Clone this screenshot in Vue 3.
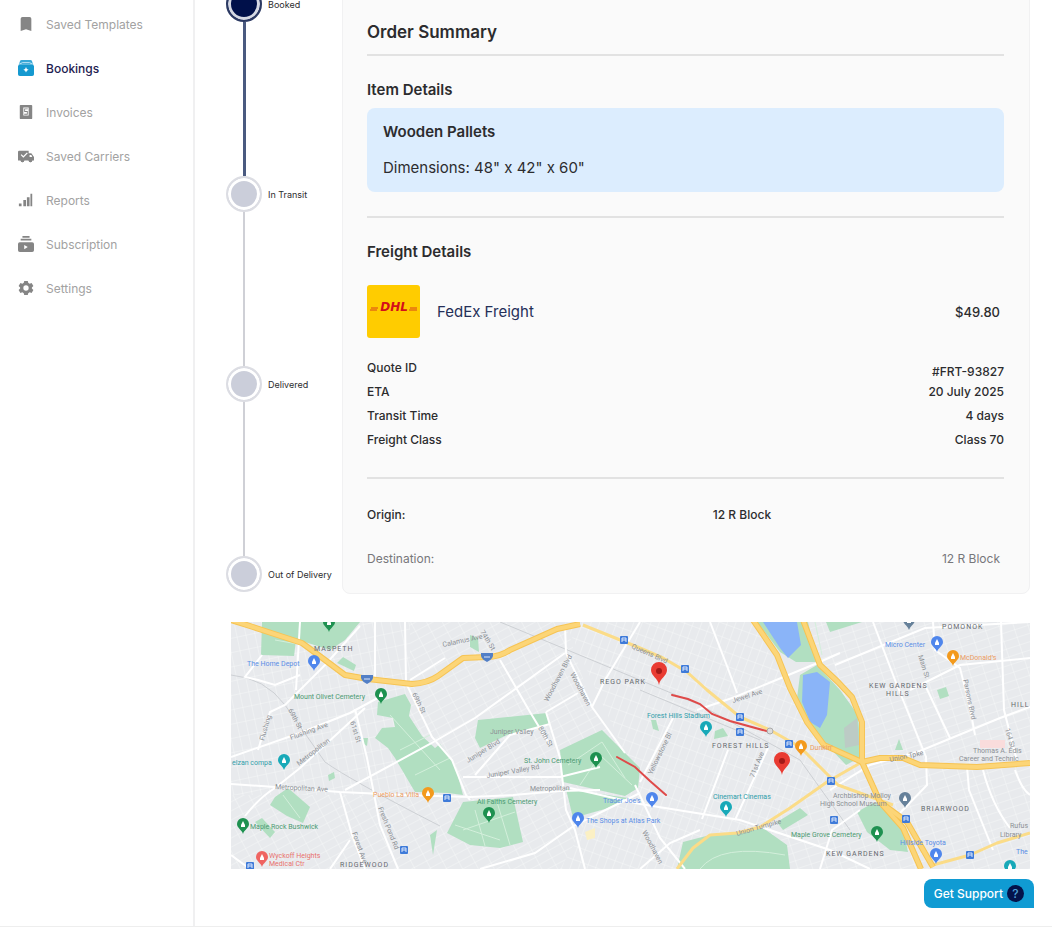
<script setup>
const navItems = [
  { label: 'Saved Templates', icon: 'bookmark' },
  { label: 'Bookings', icon: 'booking', active: true },
  { label: 'Invoices', icon: 'invoice' },
  { label: 'Saved Carriers', icon: 'truck' },
  { label: 'Reports', icon: 'bars' },
  { label: 'Subscription', icon: 'subscription' },
  { label: 'Settings', icon: 'gear' },
]

const steps = [
  { label: 'Booked', done: true },
  { label: 'In Transit' },
  { label: 'Delivered' },
  { label: 'Out of Delivery' },
]

const freight = [
  { label: 'Quote ID', value: '#FRT-93827', low: true },
  { label: 'ETA', value: '20 July 2025' },
  { label: 'Transit Time', value: '4 days' },
  { label: 'Freight Class', value: 'Class 70' },
]

const parks = [
  '262,622 360,622 345,640 330,650 308,643 296,640 294,656 261,655',
  '337,663 343,657 356,665 354,671',
  '378,702 405,694 411,705 409,716 422,736 435,748 440,744 455,765 463,795 448,793 415,792 395,758 388,748 375,738 382,728 395,727 393,718 377,715',
  '275,797 288,788 310,807 303,823 287,816 270,805',
  '255,822 262,818 275,832 270,838',
  '478,720 547,713 549,725 507,735 480,748 475,738',
  '560,750 602,730 640,768 638,788 625,796 563,782',
  '566,789 628,798 605,809 573,818',
  '463,802 513,797 523,842 500,848 470,845 447,833',
  '430,835 437,830 433,855',
  '470,635 478,638 479,652 470,647',
  '757,622 808,622 817,662 796,662 780,652',
  '800,675 817,665 840,690 858,715 861,757 846,765 830,748 810,728 797,698',
  '826,622 862,622 830,632',
  '683,842 710,835 737,833 763,828 787,845 790,869 677,869',
  '777,822 800,808 808,815 783,830',
  '857,812 873,803 900,815 908,852 890,850 867,832',
  '715,731 723,728 728,736 714,739',
  '651,720 656,720 659,731 653,729',
  '937,690 946,687 949,696 940,699',
  '895,750 899,739 903,750',
  '328,775 334,772 335,778 329,781',
  '363,738 368,738 367,746 364,744',
]

const streets = [
  'M231 757 L300 733 L350 713 L385 694',
  'M231 784 L275 787 L340 792 L405 795 L470 797 L513 795 L560 791 L600 790',
  'M245 816 Q260 797 275 788 L300 768 L350 722 L365 708',
  'M355 709 L367 758 L380 825 L398 869',
  'M262 655 L245 677 L258 680 L275 685 L300 675',
  'M360 626 L325 665 L285 705 L270 712 L258 750',
  'M300 622 L296 690',
  'M375 622 V678 M405 622 L406 682',
  'M345 790 L430 744 L475 718 L565 653',
  'M406 683 L432 737 L452 760 L466 795 L470 800',
  'M410 680 L445 658',
  'M565 625 L566 653 L592 707 L625 753',
  'M500 660 L530 712 L550 745',
  'M546 712 L560 758 L566 810 L575 830 L585 869',
  'M546 712 L578 693',
  'M475 775 L510 735 L550 724',
  'M463 777 H560 L600 767',
  'M480 869 L535 853 L575 825 L640 793',
  'M340 792 L352 835 L365 869',
  'M570 788 L640 804 L740 820 L830 850 L870 869',
  'M640 622 L605 680 L592 707',
  'M635 785 L660 838 L685 869',
  'M640 869 L670 843 L700 830',
  'M710 622 L727 666 L737 693',
  'M697 710 L735 697 L815 664 L840 653',
  'M835 665 L925 628 L1030 622',
  'M728 750 L702 819 M768 748 L735 820 M673 718 L640 782',
  'M873 622 L895 680 L926 757 L927 785 L900 813',
  'M830 790 L870 765 L920 751 L1000 718 L1030 707',
  'M933 622 L935 650 L960 668 L970 708 L975 735',
  'M1001 622 L1004 710 L1018 765',
  'M910 690 L960 665 L1030 658',
  'M925 685 L950 738 M967 767 L969 790 L993 850',
  'M983 770 Q992 805 1010 828 M1015 770 Q1022 790 1030 795',
  'M250 869 L231 855 M330 869 L350 840',
  'M820 869 L832 830 L860 810',
]

const highways = [
  'M231 620 L253 627 L302 643 L325 660 L345 675 L368 679 L412 684 Q428 683 438 676 L463 658 L487 657 Q500 657 510 650 L557 629 L580 624',
  'M753 620 L777 655 L790 688 L807 722 L824 745 L862 762',
  'M803 620 L820 665 L838 682 L852 697 L862 722 L862 762 L880 802 L907 822 L933 867',
  'M880 802 L903 828 L921 869',
  'M862 762 L880 758 L903 758 L920 765 L977 767 L1030 763',
]

const avenues = [
  'M583 625 L640 648 L663 658 L687 672 L707 690 L740 717 L770 730 L800 747 L838 785 L893 805',
  'M862 762 L827 782 L790 808 L760 827 L737 833 L710 835 L693 848 L677 869',
  'M933 865 L970 855 L997 843 L1030 833',
]

const pins = [
  { x: 314, y: 671, color: '#4f86ec' },
  { x: 381, y: 704, color: '#1e9150' },
  { x: 284, y: 770, color: '#18a9b8' },
  { x: 428, y: 803, color: '#f39a1d' },
  { x: 243, y: 834, color: '#1e9150' },
  { x: 262, y: 867, color: '#ef6461' },
  { x: 596, y: 768, color: '#1e9150' },
  { x: 489, y: 823, color: '#1e9150' },
  { x: 578, y: 828, color: '#4f86ec' },
  { x: 652, y: 808, color: '#4f86ec' },
  { x: 706, y: 737, color: '#18a9b8' },
  { x: 726, y: 817, color: '#18a9b8' },
  { x: 801, y: 756, color: '#f39a1d' },
  { x: 937, y: 652, color: '#4f86ec' },
  { x: 953, y: 666, color: '#f39a1d' },
  { x: 905, y: 808, color: '#66819a' },
  { x: 877, y: 842, color: '#1e9150' },
  { x: 936, y: 864, color: '#4f86ec' },
  { x: 329, y: 632, color: '#1e9150' },
  { x: 1010, y: 876, color: '#18a9b8' },
  { x: 909, y: 630, color: '#66819a' },
]

const stations = [
  [250, 866], [404, 850], [447, 798], [624, 640], [685, 669], [740, 717],
  [740, 732], [789, 744], [831, 781], [834, 820], [906, 819], [970, 855],
]

const shields = [[367, 679], [487, 657]]

const labels = [
  { x: 247, y: 666, t: 'The Home Depot', k: 'shop' },
  { x: 294, y: 699, t: 'Mount Olivet Cemetery', k: 'park' },
  { x: 232, y: 765, t: 'elzan compa', k: 'teal' },
  { x: 373, y: 797, t: 'Pueblo La Villa', k: 'food' },
  { x: 250, y: 829, t: 'Maple Rock Bushwick', k: 'park' },
  { x: 269, y: 858, t: 'Wyckoff Heights', k: 'health' },
  { x: 269, y: 866, t: 'Medical Ctr', k: 'health' },
  { x: 340, y: 867, t: 'RIDGEWOOD', k: 'area' },
  { x: 314, y: 651, t: 'MASPETH', k: 'area' },
  { x: 600, y: 684, t: 'REGO PARK', k: 'area' },
  { x: 647, y: 718, t: 'Forest Hills Stadium', k: 'teal' },
  { x: 712, y: 748, t: 'FOREST HILLS', k: 'area' },
  { x: 713, y: 799, t: 'Cinemart Cinemas', k: 'teal' },
  { x: 524, y: 763, t: 'St. John Cemetery', k: 'park' },
  { x: 477, y: 804, t: 'All Faiths Cemetery', k: 'park' },
  { x: 586, y: 823, t: 'The Shops at Atlas Park', k: 'shop' },
  { x: 603, y: 803, t: 'Trader Joe’s', k: 'shop' },
  { x: 885, y: 647, t: 'Micro Center', k: 'shop' },
  { x: 960, y: 660, t: 'McDonald’s', k: 'food' },
  { x: 869, y: 688, t: 'KEW GARDENS', k: 'area' },
  { x: 886, y: 696, t: 'HILLS', k: 'area' },
  { x: 1011, y: 707, t: 'HILL', k: 'area' },
  { x: 973, y: 753, t: 'Thomas A. Edis', k: 'road' },
  { x: 959, y: 761, t: 'Career and Technic', k: 'road' },
  { x: 833, y: 798, t: 'Archbishop Molloy', k: 'road' },
  { x: 820, y: 806, t: 'High School Museum', k: 'road' },
  { x: 921, y: 811, t: 'BRIARWOOD', k: 'area' },
  { x: 791, y: 837, t: 'Maple Grove Cemetery', k: 'park' },
  { x: 826, y: 856, t: 'KEW GARDENS', k: 'area' },
  { x: 900, y: 845, t: 'Hillside Toyota', k: 'shop' },
  { x: 1010, y: 828, t: 'Rufus', k: 'road' },
  { x: 1000, y: 837, t: 'Library', k: 'road' },
  { x: 1016, y: 854, t: 'The', k: 'shop' },
  { x: 810, y: 750, t: 'Dunkin’', k: 'food' },
  { x: 942, y: 629, t: 'POMONOK', k: 'area' },
]

const roadNames = [
  { x: 291, y: 740, r: -20, t: 'Flushing Ave' },
  { x: 299, y: 766, r: -38, t: 'Metropolitan' },
  { x: 264, y: 741, r: -74, t: 'Flushing' },
  { x: 288, y: 710, r: 62, t: '69th St' },
  { x: 275, y: 789, r: 3, t: 'Metropolitan Ave' },
  { x: 350, y: 722, r: 72, t: '61st St' },
  { x: 378, y: 808, r: 68, t: 'Fresh Pond Rd' },
  { x: 352, y: 833, r: 70, t: 'Forest Ave' },
  { x: 412, y: 694, r: 64, t: '69th St' },
  { x: 443, y: 647, r: -12, t: 'Calamus Ave' },
  { x: 480, y: 632, r: 58, t: '74th St' },
  { x: 548, y: 702, r: -62, t: 'Woodhaven Blvd' },
  { x: 570, y: 674, r: 62, t: 'Woodhaven' },
  { x: 490, y: 734, r: 0, t: 'Juniper Valley' },
  { x: 468, y: 763, r: -32, t: 'Juniper Blvd' },
  { x: 487, y: 778, r: -10, t: 'Juniper Valley Rd' },
  { x: 530, y: 791, r: -1, t: 'Metropolitan' },
  { x: 538, y: 728, r: 60, t: '80th St' },
  { x: 631, y: 648, r: 24, t: 'Queens Blvd' },
  { x: 652, y: 775, r: -64, t: 'Yellowstone Bl' },
  { x: 733, y: 703, r: -18, t: 'Jewel Ave' },
  { x: 754, y: 778, r: -68, t: '71st Ave' },
  { x: 642, y: 832, r: 62, t: 'Woodhaven' },
  { x: 737, y: 836, r: -16, t: 'Union Turnpike' },
  { x: 963, y: 680, r: 78, t: 'Parsons Blvd' },
  { x: 918, y: 656, r: 72, t: 'Main St' },
  { x: 1005, y: 729, r: 74, t: '164 St' },
  { x: 890, y: 762, r: -12, t: 'Union Tpke' },
]
</script>

<template>
  <div class="page">
    <nav class="sidebar" aria-label="Main">
      <a v-for="item in navItems" :key="item.label" href="#" class="nav-link" :class="{ active: item.active }">
        <svg class="nav-icon" viewBox="0 0 18 18" fill="currentColor" aria-hidden="true">
          <path v-if="item.icon === 'bookmark'" d="M5 1h8a2 2 0 0 1 2 2v14l-6-2-6 2V3a2 2 0 0 1 2-2z" />
          <template v-else-if="item.icon === 'booking'">
            <path d="M4 0h10a2 2 0 0 1 2 2l1 3H1l1-3a2 2 0 0 1 2-2z" opacity=".85" />
            <path d="M1 5l4-2h8l4 2" stroke="#d5eefa" stroke-width="1" fill="none" />
            <path fill-rule="evenodd" d="M1 5h16l1 2v9a2 2 0 0 1-2 2H2a2 2 0 0 1-2-2V7zM9 8l-1 2-2 1 2 1 1 2 1-2 2-1-2-1z" />
          </template>
          <path v-else-if="item.icon === 'invoice'" fill-rule="evenodd" d="M3 1h12a1 1 0 0 1 1 1v14a1 1 0 0 1-1 1H3a1 1 0 0 1-1-1V2a1 1 0 0 1 1-1zM6 4v9h6V4zM7 5h4v1H8v2h3v4H7v-1h3V9H7z" />
          <template v-else-if="item.icon === 'truck'">
            <path fill-rule="evenodd" d="M1 3h11v3h3l3 4v4h-2a2 2 0 0 1-4 0H7a2 2 0 0 1-4 0H0V4zM3 8l3 3 5-5-1-1-4 4-2-2zM13 8v2h3l-1-2z" />
            <circle cx="5" cy="14" r="2" />
            <circle cx="14" cy="14" r="2" />
          </template>
          <path v-else-if="item.icon === 'bars'" d="M1 13h3v3H1zM6 9h3v7H6zM10 6h3v10h-3zM14 2h2v14h-2z" />
          <path v-else-if="item.icon === 'subscription'" fill-rule="evenodd" d="M5 0h8v2H5zM3 3h12v2H3zM2 7h14a2 2 0 0 1 2 2v7a2 2 0 0 1-2 2H2a2 2 0 0 1-2-2V9a2 2 0 0 1 2-2zM7 10v5l4-2.500z" />
          <path v-else fill-rule="evenodd" d="M7 1h4l.5 2.200 1.600.9 2.200-.7 2 3.400L15.600 8.300v1.400l1.700 1.500-2 3.400-2.200-.7-1.600.9L11 17H7l-.5-2.200-1.600-.9-2.200.7-2-3.400 1.700-1.500V8.300L.7 6.800l2-3.400 2.200.7 1.600-.9zM9 6a3 3 0 1 0 0 6 3 3 0 0 0 0-6z" />
        </svg>
        <span>{{ item.label }}</span>
      </a>
    </nav>

    <main class="main">
      <div class="order">
        <ol class="steps">
          <li v-for="step in steps" :key="step.label" class="step" :class="{ done: step.done }">
            <span class="dot"></span>
            <span class="step-label">{{ step.label }}</span>
          </li>
        </ol>

        <section class="card">
          <h1>Order Summary</h1>
          <hr />
          <h2 class="item-heading">Item Details</h2>
          <div class="item">
            <strong>Wooden Pallets</strong>
            <span>Dimensions: 48" x 42" x 60"</span>
          </div>
          <hr />
          <h2>Freight Details</h2>
          <div class="carrier">
            <svg class="logo" viewBox="0 0 53 53" role="img" aria-label="DHL">
              <rect width="53" height="53" rx="3" fill="#fc0" />
              <path d="M4 23h7M3 25h7M43 23h7M42 25h8" stroke="#d8431a" />
              <text x="27" y="26" text-anchor="middle">DHL</text>
            </svg>
            <span class="carrier-name">FedEx Freight</span>
            <span class="price">$49.80</span>
          </div>
          <dl class="facts">
            <div v-for="row in freight" :key="row.label" class="fact">
              <dt>{{ row.label }}</dt>
              <dd :class="{ low: row.low }">{{ row.value }}</dd>
            </div>
          </dl>
          <hr />
          <dl class="route">
            <div class="origin">
              <dt>Origin:</dt>
              <dd>12 R Block</dd>
            </div>
            <div class="destination">
              <dt>Destination:</dt>
              <dd>12 R Block</dd>
            </div>
          </dl>
        </section>
      </div>

      <svg class="map" viewBox="231 622 799 247" role="img" aria-label="Route map">
        <defs>
          <pattern id="grid-a" width="9" height="14" patternUnits="userSpaceOnUse" patternTransform="rotate(-12)">
            <path d="M0 0H9M0 0V14" stroke="#f6f7f8" fill="none" />
          </pattern>
          <pattern id="grid-b" width="14" height="8" patternUnits="userSpaceOnUse" patternTransform="rotate(-28)">
            <path d="M0 0H14M0 0V8" stroke="#f6f7f8" fill="none" />
          </pattern>
          <pattern id="grid-c" width="8" height="13" patternUnits="userSpaceOnUse" patternTransform="rotate(20)">
            <path d="M0 0H8M0 0V13" stroke="#f6f7f8" fill="none" />
          </pattern>
          <pattern id="grid-d" width="14" height="8" patternUnits="userSpaceOnUse" patternTransform="rotate(-18)">
            <path d="M0 0H14M0 0V8" stroke="#f6f7f8" fill="none" />
          </pattern>
        </defs>
        <rect x="231" y="622" width="799" height="247" fill="#e8eaed" />
        <path d="M231 622H410V795H231z" fill="url(#grid-a)" />
        <path d="M231 795H460V869H231zM410 622H565L592 707 625 753 560 869H460V795H410z" fill="url(#grid-b)" />
        <path d="M565 622H753L807 722 862 762 760 827 677 869H560L625 753z" fill="url(#grid-c)" />
        <path d="M803 622H1030V869H677L862 762z" fill="url(#grid-d)" />
        <polygon v-for="p in parks" :key="p" :points="p" fill="#b1dfc1" />
        <path d="M763 622H797L801 645 788 658 780 648zM803 675L817 672 830 682 827 715 820 728 810 722 802 702z" fill="#8ab4f8" />
        <path d="M844 728L857 718 859 745 845 748z" fill="#bccbc5" />
        <path d="M980 740h25v8h-25z" fill="#f9dcdc" />
        <path d="M585 832l10-4v10l-8 2z" fill="#fbf0c4" />
        <path d="M568 765L602 742 625 778M580 785L600 755 632 785M463 830L515 812M475 810L485 846M497 802L510 845M455 825L500 840M700 869Q720 843 785 855M815 622L822 655M390 715L440 770M400 750L430 735M415 775L450 758M275 640L320 648M283 795L300 818" stroke="#d3efdb" fill="none" />
        <path d="M231 675Q265 678 285 705L325 762Q350 780 440 826M500 622L700 705 800 760 850 830M640 690L760 740" stroke="#cdd0d4" fill="none" />
        <g fill="none" stroke="#fff" stroke-width="2">
          <path v-for="s in streets" :key="s" :d="s" />
        </g>
        <g fill="none" stroke-linejoin="round">
          <path v-for="a in avenues" :key="a" :d="a" stroke="#fbdc88" stroke-width="3" />
          <path v-for="h in highways" :key="h" :d="h" stroke="#f6c454" stroke-width="6" />
          <path v-for="h in highways" :key="'in' + h" :d="h" stroke="#fcd577" stroke-width="4" />
        </g>
        <text v-for="(r, i) in roadNames" :key="'r' + i" class="road" :transform="`translate(${r.x} ${r.y}) rotate(${r.r})`">{{ r.t }}</text>
        <text v-for="(l, i) in labels" :key="'l' + i" :class="l.k" :x="l.x" :y="l.y">{{ l.t }}</text>
        <g v-for="s in stations" :key="s.join()" :transform="`translate(${s[0]} ${s[1]})`">
          <rect x="-4" y="-4" width="8" height="8" rx="1" fill="#3f7bd9" />
          <path d="M-2 2v-4h4v4M-2 0h4" stroke="#dce7fa" fill="none" />
        </g>
        <g v-for="s in shields" :key="s.join()" :transform="`translate(${s[0]} ${s[1]})`">
          <path d="M-6-4h12q1 6-6 9q-7-3-6-9z" fill="#527fc6" />
          <path d="M-3 0h6" stroke="#dce7fa" />
        </g>
        <g v-for="p in pins" :key="p.x + '-' + p.y" :transform="`translate(${p.x} ${p.y})`">
          <path d="M0 0C-1-4-6-6-6-10a6 6 0 0 1 12 0C6-6 1-4 0 0z" :fill="p.color" />
          <path d="M-2-9l2-4 2 4v2h-4z" fill="#fff" />
        </g>
        <g fill="none" stroke="#df4a49" stroke-width="2" stroke-linecap="round">
          <path d="M672 695L688 699 700 704 712 714 730 721 770 732" />
          <path d="M617 757L635 767 650 781 666 795" />
        </g>
        <circle cx="770" cy="731" r="3" fill="#ddd" stroke="#aaa" />
        <g v-for="m in [[659, 685], [782, 775]]" :key="m[0]" :transform="`translate(${m[0]} ${m[1]})`">
          <path d="M0 0C-1-7-8-9-8-15a8 8 0 0 1 16 0C8-9 1-7 0 0z" fill="#e93b32" />
          <circle cy="-14" r="3" fill="#a31a17" />
        </g>
      </svg>

      <button type="button" class="support">
        Get Support
        <span class="help" aria-hidden="true">?</span>
      </button>
    </main>
  </div>
</template>

<style>
body {
  margin: 0;
  background: #fff;
}
</style>

<style scoped>
.page {
  display: flex;
  min-height: 100vh;
  overflow: hidden;
  box-sizing: border-box;
  border-bottom: 1px solid #eee;
  font-family: Inter, "Liberation Sans", sans-serif;
  color: #2c2c2e;
}
.sidebar {
  display: flex;
  flex-direction: column;
  flex: 0 0 195px;
  box-sizing: border-box;
  padding-top: 2px;
  border-right: 2px solid #f0f0f1;
}
.nav-link {
  display: flex;
  align-items: center;
  gap: 12px;
  height: 44px;
  padding-left: 18px;
  font-size: 12px;
  color: #a2a2a2;
  text-decoration: none;
}
.nav-icon {
  width: 16px;
  height: 16px;
  color: #858585;
}
.nav-link.active {
  color: #1d2150;
  font-weight: 500;
}
.active .nav-icon {
  color: #1599d0;
}
.main {
  display: flex;
  flex: 1;
  flex-direction: column;
  min-width: 0;
  margin-top: -14px;
  padding: 0 22px 0 31px;
}
.order {
  display: flex;
}
.steps {
  flex: 0 0 116px;
  margin: 0;
  padding: 0;
  list-style: none;
}
.step {
  position: relative;
  display: flex;
  align-items: center;
  gap: 6px;
  height: 36px;
  margin-bottom: 154px;
}
.step:last-child {
  margin-bottom: 0;
}
.step:not(:last-child)::after {
  content: "";
  position: absolute;
  top: 36px;
  left: 17px;
  width: 2px;
  height: 154px;
  background: #cfd0d6;
}
.dot {
  box-sizing: border-box;
  width: 36px;
  height: 36px;
  border: 2px solid #dcdde3;
  border-radius: 50%;
  background: #cbceda;
  box-shadow: inset 0 0 0 3px #fff;
}
.done .dot {
  border-color: #2c3a63;
  background: #00104a;
  box-shadow: inset 0 0 0 3px #d5d9e4;
}
.step.done::after {
  width: 3px;
  background: #4a5a80;
}
.step-label {
  font-size: 9px;
  white-space: nowrap;
}
.card {
  flex: 1;
  min-width: 0;
  padding: 33px 25px 22px 24px;
  border: 1px solid #f1f1f2;
  border-radius: 8px;
  background: #fafafa;
}
h1,
h2 {
  margin: 0;
  font-weight: 600;
}
h1 {
  font-size: 17px;
  line-height: 24px;
}
h2 {
  font-size: 15px;
  line-height: 20px;
}
hr {
  height: 2px;
  margin: 24px 0;
  border: 0;
  background: #e2e2e2;
}
h1 + hr {
  margin-top: 10px;
}
.item-heading {
  margin-bottom: 8px;
}
.item {
  display: flex;
  flex-direction: column;
  gap: 16px;
  padding: 14px 16px;
  border-radius: 8px;
  background: #dcedfe;
  font-size: 15px;
  line-height: 20px;
}
.item strong {
  font-weight: 600;
}
.carrier {
  display: flex;
  align-items: center;
  gap: 17px;
  margin: 23px 0 18px;
}
.logo {
  width: 53px;
  height: 53px;
}
.logo text {
  font: italic bold 12px "DejaVu Sans", sans-serif;
  fill: #d40f1b;
}
.carrier-name {
  flex: 1;
  font-size: 15px;
  color: #252f58;
}
.price {
  padding-right: 4px;
  font-size: 13px;
  font-weight: 500;
}
dl,
dd {
  margin: 0;
}
.facts,
.route {
  font-size: 12px;
  line-height: 24px;
  font-weight: 500;
}
.fact {
  display: flex;
  justify-content: space-between;
}
.low {
  align-self: flex-end;
  line-height: 16px;
}
.facts + hr {
  margin-top: 25px;
}
.route {
  display: flex;
  flex-direction: column;
  gap: 20px;
}
.origin {
  display: grid;
  grid-template-columns: 19fr 16fr;
}
.destination {
  display: flex;
  justify-content: space-between;
  padding-right: 4px;
  font-weight: 400;
  color: #77777a;
}
.map {
  display: block;
  margin: 28px 0 10px 5px;
  font-family: Roboto, "Liberation Sans", sans-serif;
  font-size: 7px;
}
.shop { fill: #5b8ee6; }
.park { fill: #4c9b73; }
.teal { fill: #2f9eaa; }
.food { fill: #eb9b62; }
.health { fill: #e8716d; }
.area { fill: #66696e; letter-spacing: 1px; }
.road { fill: #8c9095; }
.support {
  display: flex;
  align-items: center;
  align-self: flex-end;
  gap: 4px;
  height: 29px;
  margin-right: -4px;
  padding: 0 10px;
  border: 0;
  border-radius: 8px 8px 0 8px;
  background: #109bd3;
  color: #fff;
  font: 500 12px Inter, "Liberation Sans", sans-serif;
}
.help {
  width: 17px;
  height: 17px;
  border-radius: 50%;
  background: #04134b;
  color: #4fa3d8;
  line-height: 17px;
}
</style>
